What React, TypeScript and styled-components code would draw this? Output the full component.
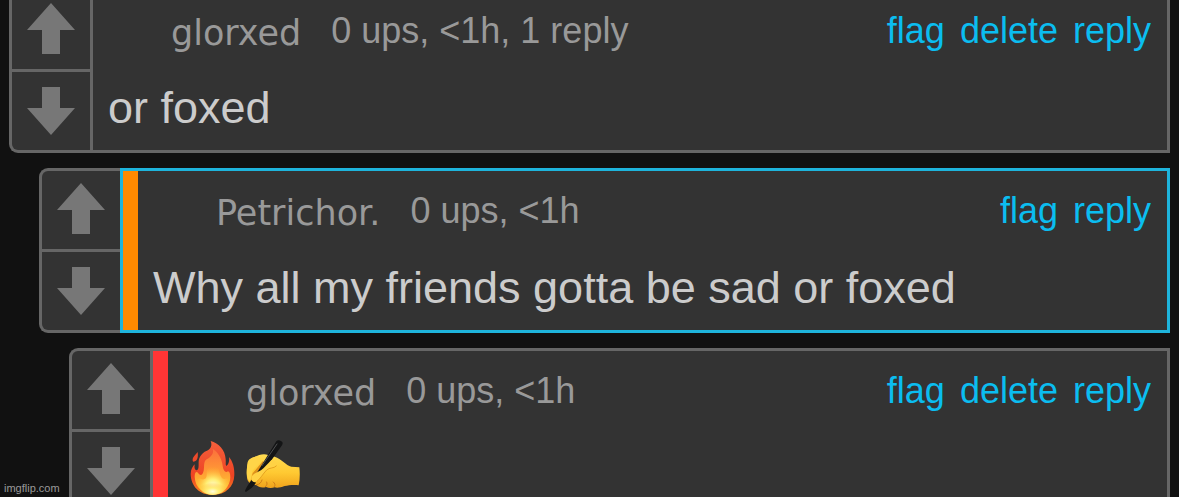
import React from "react";
import styled, { createGlobalStyle } from "styled-components";

const GlobalStyle = createGlobalStyle`
  body {
    margin: 0;
    background: #111;
    font-family: "Liberation Sans", Arial, Helvetica, sans-serif;
  }
`;

const Page = styled.main`
  position: relative;
  height: 100vh;
  overflow: hidden;
`;

const Thread = styled.div`
  display: flex;
  flex-direction: column;
  gap: 15px;
  margin-top: -12px;
  padding: 0 9px;
`;

const CommentRow = styled.article<{ $depth: number }>`
  display: flex;
  margin-left: ${(p) => p.$depth * 30}px;
`;

const Votes = styled.div`
  display: flex;
  flex-direction: column;
  flex: none;
  width: 78px;
  gap: 3px;
  background: #666;
  border: 3px solid #666;
  border-right: none;
  border-radius: 9px 0 0 9px;
`;

const VoteButton = styled.button<{ $up?: boolean }>`
  display: flex;
  justify-content: center;
  align-items: flex-start;
  height: 78px;
  margin: 0;
  padding: ${(p) => (p.$up ? 12 : 15)}px 0 0;
  border: none;
  border-radius: ${(p) => (p.$up ? "6px 0 0 0" : "0 0 0 6px")};
  background: #333;
  color: #777;
  cursor: pointer;
`;

const Body = styled.div<{ $selected?: boolean }>`
  flex: 1;
  min-width: 0;
  display: flex;
  background: #333;
  border: 3px solid ${(p) => (p.$selected ? "#1eb4dc" : "#666")};
`;

const Stripe = styled.div<{ $color: string }>`
  flex: none;
  width: 15px;
  background: ${(p) => p.$color};
`;

const Content = styled.div`
  flex: 1;
  min-width: 0;
  padding: 19px 16px 0 15px;
`;

const Header = styled.header`
  display: flex;
  align-items: flex-start;
  padding-left: 63px;
  font-size: 36px;
  line-height: 42px;
  white-space: nowrap;
`;

const UserName = styled.a`
  padding-top: 3px;
  margin-right: 30px;
  color: #999;
  font-family: "DejaVu Sans", Verdana, sans-serif;
  font-size: 35px;
  line-height: 40px;
  text-decoration: none;
`;

const Meta = styled.span`
  color: #999;
`;

const Actions = styled.nav`
  display: flex;
  gap: 15px;
  margin-left: auto;
`;

const Action = styled.a`
  color: #0bbdf0;
  text-decoration: none;
`;

const Message = styled.p`
  display: flex;
  gap: 2px;
  margin: 25px 0 0;
  color: #ccc;
  font-size: 45px;
  line-height: 60px;
`;

const Watermark = styled.span`
  position: absolute;
  left: 4px;
  bottom: 2px;
  color: #999;
  font-size: 11px;
  line-height: 14px;
`;

const UpArrow = () => (
  <svg width="48" height="51" viewBox="0 0 48 51" aria-hidden="true">
    <path d="M24 0 48 27H33V51H15V27H0Z" fill="currentColor" />
  </svg>
);

const DownArrow = () => (
  <svg width="48" height="48" viewBox="0 0 48 48" aria-hidden="true">
    <path d="M15 0H33V21H48L24 48 0 21H15Z" fill="currentColor" />
  </svg>
);

const Fire = () => (
  <svg width="57" height="58" viewBox="9 24 171 174" role="img" aria-label="fire">
    <defs>
      <linearGradient id="flameOuter" x1="0" y1="0" x2="0" y2="1">
        <stop offset="0" stopColor="#f4603c" />
        <stop offset="0.65" stopColor="#ee4323" />
        <stop offset="1" stopColor="#f98a1f" />
      </linearGradient>
      <linearGradient id="flameMid" x1="0" y1="0" x2="0" y2="1">
        <stop offset="0" stopColor="#fb6f3c" />
        <stop offset="0.5" stopColor="#ff9a35" />
        <stop offset="1" stopColor="#ffd02c" />
      </linearGradient>
      <radialGradient id="flameCore" cx="0.5" cy="0.78" r="0.6">
        <stop offset="0" stopColor="#fffde0" />
        <stop offset="0.4" stopColor="#ffef75" />
        <stop offset="1" stopColor="#ffb52e" stopOpacity="0" />
      </radialGradient>
    </defs>
    <path
      d="M92 33C116 39 136 60 137 88C138 98 136 106 139 108C146 104 149 91 147 81C158 94 164 113 163 135C162 171 137 194 98 195C58 195 33 169 32 132C32 119 38 109 44 103C42 115 45 121 51 121C59 117 54 100 57 88C61 74 72 65 81 62C93 57 97 46 92 33Z"
      fill="url(#flameOuter)"
    />
    <path d="M53 66C47 75 37 80 38 92C39 96 41 96 45 94C52 91 55 81 53 66Z" fill="#ee4a2b" />
    <path
      d="M98 56C103 72 92 80 80 88C69 96 74 110 71 122C68 136 61 138 55 130C49 122 44 128 44 140C46 174 68 190 98 192C130 191 150 170 151 142C151 130 148 124 144 124C136 130 130 122 128 108C126 86 114 66 98 56Z"
      fill="url(#flameMid)"
    />
    <path
      d="M101 92C95 108 78 112 80 133C81 147 71 151 63 147C55 143 50 149 52 158C59 183 76 193 98 194C122 194 141 182 146 160C148 148 142 144 136 146C126 150 121 138 118 124C116 108 112 100 101 92Z"
      fill="url(#flameCore)"
    />
    <ellipse cx="98" cy="172" rx="38" ry="22" fill="url(#flameCore)" />
  </svg>
);

const WritingHand = () => (
  <svg width="62" height="59" viewBox="0 6 186 177" role="img" aria-label="writing hand">
    <defs>
      <linearGradient id="handSkin" x1="0" y1="0" x2="0" y2="1">
        <stop offset="0" stopColor="#ffdc52" />
        <stop offset="0.55" stopColor="#ffc932" />
        <stop offset="1" stopColor="#f0a31c" />
      </linearGradient>
    </defs>
    <path
      d="M16 84C17 70 27 66 38 63C50 56 66 52 78 57L98 62C118 68 132 88 148 92L172 94C174 110 174 130 170 148C154 145 140 148 128 150C116 154 106 157 98 154C90 157 80 157 72 153C60 157 48 153 44 148C30 146 16 142 15 124C13 110 15 96 16 84Z"
      fill="url(#handSkin)"
    />
    <path d="M32 112L62 76L78 82L56 104L40 138L26 136Z" fill="#dd911c" />
    <path
      d="M103 16C107 12 112 12 118 16C123 19 123 23 120 28L76 90C66 104 54 112 44 112Z"
      fill="#141516"
    />
    <path d="M105 24L60 89" stroke="#505152" strokeWidth="3" strokeLinecap="round" fill="none" />
    <path d="M28 132L42 140C36 150 24 160 13 167C10 168 8 166 10 162C15 150 22 142 28 132Z" fill="#141516" />
    <path
      d="M37 63C48 59 56 64 55 74C53 84 40 92 32 104C28 114 29 130 23 135C15 130 13 112 15 96C17 78 24 67 37 63Z"
      fill="#ffd548"
    />
    <path
      d="M88 72C101 74 110 80 103 90C96 98 82 94 74 102C62 114 56 128 45 136C34 143 25 134 29 122C34 112 48 108 58 102C68 95 76 84 88 72Z"
      fill="#ffd245"
    />
    <path
      d="M103 90C96 98 82 94 74 102C62 114 56 128 45 136"
      stroke="#e7a321"
      strokeWidth="3"
      strokeLinecap="round"
      fill="none"
    />
    <path
      d="M44 146C52 146 58 140 60 132M70 152C76 148 76 142 74 138M97 152C101 148 99 142 94 138"
      stroke="#cf7f18"
      strokeWidth="3"
      strokeLinecap="round"
      fill="none"
    />
  </svg>
);

type CommentProps = {
  depth: number;
  user: string;
  meta: string;
  actions: string[];
  stripe?: string;
  selected?: boolean;
  children: React.ReactNode;
};

const Comment = ({ depth, user, meta, actions, stripe, selected, children }: CommentProps) => (
  <CommentRow $depth={depth}>
    <Votes>
      <VoteButton $up type="button" aria-label="Upvote">
        <UpArrow />
      </VoteButton>
      <VoteButton type="button" aria-label="Downvote">
        <DownArrow />
      </VoteButton>
    </Votes>
    <Body $selected={selected}>
      {stripe && <Stripe $color={stripe} />}
      <Content>
        <Header>
          <UserName href="#user">{user}</UserName>
          <Meta>{meta}</Meta>
          <Actions>
            {actions.map((a) => (
              <Action key={a} href={`#${a}`}>
                {a}
              </Action>
            ))}
          </Actions>
        </Header>
        <Message>{children}</Message>
      </Content>
    </Body>
  </CommentRow>
);

export default function App() {
  return (
    <>
      <GlobalStyle />
      <Page>
        <Thread>
          <Comment depth={0} user="glorxed" meta="0 ups, <1h, 1 reply" actions={["flag", "delete", "reply"]}>
            or foxed
          </Comment>
          <Comment
            depth={1}
            user="Petrichor."
            meta="0 ups, <1h"
            actions={["flag", "reply"]}
            stripe="#ff8a00"
            selected
          >
            Why all my friends gotta be sad or foxed
          </Comment>
          <Comment
            depth={2}
            user="glorxed"
            meta="0 ups, <1h"
            actions={["flag", "delete", "reply"]}
            stripe="#ff3535"
          >
            <Fire />
            <WritingHand />
          </Comment>
        </Thread>
        <Watermark>imgflip.com</Watermark>
      </Page>
    </>
  );
}
